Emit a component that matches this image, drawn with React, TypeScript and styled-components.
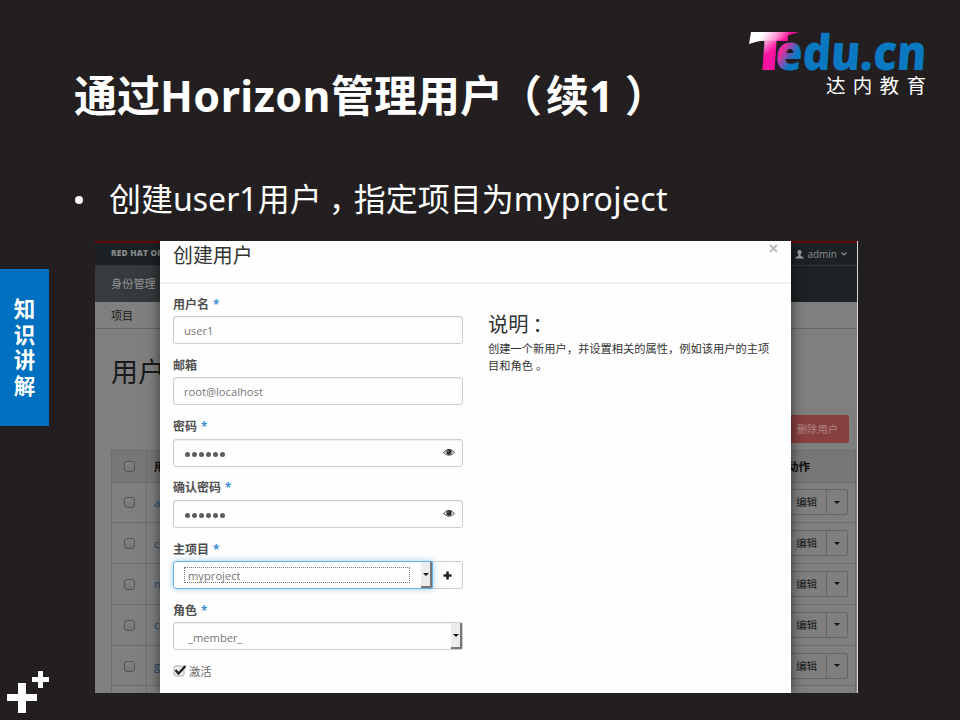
import React from 'react';
import styled, { createGlobalStyle } from 'styled-components';

const GlobalStyle = createGlobalStyle`
  * { box-sizing: border-box; }
  body {
    margin: 0;
    background: #231f20;
    font-family: "Open Sans", "Noto Sans CJK SC", sans-serif;
  }
`;

/* ---------- slide ---------- */

const Slide = styled.main`
  width: 960px;
  height: 720px;
  overflow: hidden;
  background: #231f20;
  color: #fff;
  display: grid;
  grid-template-rows: 241px 479px;
`;

const Header = styled.header`
  display: grid;
  grid-template-columns: 675px 1fr;
  padding: 0 0 0 74px;
`;

const Headings = styled.div`
  display: flex;
  flex-direction: column;
`;

const Title = styled.h1`
  margin: 65px 0 0;
  height: 62px;
  line-height: 62px;
  font-size: 43px;
  font-weight: 700;
  font-family: "Noto Sans", "Noto Sans CJK SC", sans-serif;
  white-space: nowrap;
`;

const Latin = styled.span`
  letter-spacing: 0.45px;
`;

const OpeningParen = styled.span`
  margin: 0 4px 0 -4px;
`;

const ClosingParen = styled.span`
  margin-left: 11px;
`;

const Bullet = styled.p`
  margin: 48px 0 0;
  height: 48px;
  line-height: 48px;
  display: flex;
  font-size: 32px;
  font-family: "Noto Sans", "Noto Sans CJK SC", sans-serif;
  white-space: nowrap;

  &::before {
    content: "";
    width: 8px;
    height: 8px;
    border-radius: 50%;
    background: #fff;
    margin: 21px 26px 0 1px;
  }
`;

const Project = styled.span`
  letter-spacing: 0.35px;
`;

const Comma = styled.span`
  margin: 0 -7px 0 7px;
`;

const Colon = styled.span`
  margin-left: 4px;
`;

const Brand = styled.div`
  width: 186px;
  padding-top: 24px;
`;

const BrandName = styled.div`
  margin-top: -2px;
  padding-left: 77px;
  font-family: "Noto Sans CJK SC", sans-serif;
  font-size: 19.5px;
  line-height: 25px;
  letter-spacing: 7.3px;
  white-space: nowrap;
`;

const LogoMark = styled.svg`
  display: block;
`;

const Body = styled.div`
  display: grid;
  grid-template-columns: 95px 763px;
`;

const Rail = styled.aside`
  display: flex;
  flex-direction: column;
  padding-top: 28px;
`;

const SideTab = styled.div`
  width: 49px;
  height: 157px;
  padding-top: 26px;
  background: #0070c0;
  display: flex;
  flex-direction: column;
  align-items: center;
  font-family: "Noto Sans CJK SC", sans-serif;
  font-size: 21.5px;
  font-weight: 700;
  line-height: 25.5px;
`;

const Pluses = styled.svg`
  margin: 245px 0 0 7px;
`;

/* ---------- dashboard behind the dialog ---------- */

const Screen = styled.section`
  position: relative;
  width: 763px;
  height: 452px;
  overflow: hidden;
  background: #7f7f7f;
  border-right: 1px solid #d8d8d8;
  color: #1a1a1a;
  font-size: 11px;
  white-space: nowrap;
`;

const TopBar = styled.div`
  height: 24px;
  padding: 0 9px 0 16px;
  border-top: 2px solid #6c0508;
  background: #1c2224;
  color: #8b8e8f;
  display: flex;
  justify-content: space-between;
  align-items: center;
`;

const Product = styled.span`
  font-size: 8.3px;
  font-weight: 800;
  letter-spacing: 0.2px;
  color: #858789;
  margin-top: -4px;
`;

const UserMenu = styled.span`
  display: flex;
  align-items: center;
  gap: 3px;
  font-size: 10px;
  line-height: 14px;
`;

const NavBar = styled.div`
  height: 37px;
  padding-left: 16px;
  background: linear-gradient(90deg, #383c3e 0, #34383a 80px, #1d2224 600px);
  border-top: 1px solid #303536;
  color: #909293;
  line-height: 36px;
  font-size: 11.2px;
`;

const SubNav = styled.div`
  height: 27px;
  padding-left: 16px;
  border-bottom: 1px solid #676767;
  line-height: 27px;
  font-size: 11px;
`;

const PageHead = styled.div`
  height: 121px;
  padding: 21px 8px 0 16px;
  display: flex;
  justify-content: space-between;
`;

const PageTitle = styled.h2`
  margin: 0;
  font-size: 27px;
  line-height: 44px;
  font-weight: 400;
`;

const DeleteButton = styled.span`
  width: 79px;
  height: 28px;
  margin-top: 65px;
  padding-right: 11px;
  border-radius: 2px;
  background: #883f3f;
  color: #ad8585;
  text-align: right;
  font-size: 10.3px;
  line-height: 28px;
`;

const Table = styled.div`
  width: 745px;
  margin-left: 16px;
  border: 1px solid #6c6c6c;
`;

const Row = styled.div<{ $head?: boolean }>`
  height: ${(p) => (p.$head ? 31.5 : 40.8)}px;
  border-bottom: 1px solid #6c6c6c;
  background: ${(p) => (p.$head ? '#777' : 'transparent')};
  font-weight: ${(p) => (p.$head ? 700 : 400)};
  display: grid;
  grid-template-columns: 35px 1fr 69px;
  align-items: center;
`;

const CheckCell = styled.div`
  align-self: stretch;
  display: flex;
  align-items: center;
  justify-content: center;
  border-right: 1px solid #6c6c6c;
`;

const Box = styled.i`
  width: 11px;
  height: 11px;
  margin: 1px 0 0 1px;
  border: 1px solid #555;
  border-radius: 3px;
  background: linear-gradient(#848484, #757575);
`;

const Name = styled.span<{ $link?: boolean }>`
  padding-left: 7px;
  color: ${(p) => (p.$link ? '#1f4567' : '#0c0c0c')};
`;

const ActionHead = styled.span`
  padding-left: 1px;
  font-size: 11.5px;
  color: #0c0c0c;
`;

const Actions = styled.div`
  width: 62px;
  height: 26px;
  border: 1px solid #666;
  border-radius: 2px;
  display: grid;
  grid-template-columns: 40px 1fr;
  align-items: center;
  font-size: 10.6px;
  line-height: 24px;
`;

const ActionLabel = styled.span`
  padding-left: 9px;
  border-right: 1px solid #666;
`;

const Caret = styled.i`
  justify-self: center;
  border: 3px solid transparent;
  border-top-color: #111;
  border-bottom: 0;
`;

/* ---------- dialog ---------- */

const Dialog = styled.div`
  position: absolute;
  left: 65px;
  top: 0;
  width: 631px;
  height: 452px;
  background: #fefefe;
  box-shadow: 0 0 12px rgba(0, 0, 0, 0.6);
  color: #333;
`;

const DialogHead = styled.div`
  height: 43px;
  padding: 0 13px;
  border-bottom: 2px solid #f0f0f0;
  display: flex;
  justify-content: space-between;
  font-size: 19.9px;
  line-height: 30px;
`;

const Close = styled.svg`
  margin: 3px 0 0;
`;

const DialogBody = styled.div`
  display: grid;
  grid-template-columns: 290px 290px;
  gap: 25px;
  padding: 10px 13px 0;
`;

const Field = styled.div`
  height: 61.3px;
`;

const Label = styled.div`
  height: 22px;
  line-height: 20px;
  padding-top: 0.5px;
  font-size: 12px;
  font-weight: 600;
  color: #505050;
`;

const Required = styled.span`
  margin-left: 4px;
  color: #3b8ed6;
  font-weight: 700;
  font-size: 11.5px;
`;

const Input = styled.div<{ $focus?: boolean; $flat?: boolean }>`
  flex: 1;
  height: 28px;
  padding: 0 7px 0 10px;
  border: 1px solid ${(p) => (p.$focus ? '#66afe9' : '#ccc')};
  border-radius: ${(p) => (p.$flat ? '3px 0 0 3px' : '3px')};
  box-shadow: ${(p) => (p.$focus ? '0 0 6px rgba(102, 175, 233, 0.65)' : 'inset 0 1px 1px rgba(0,0,0,.06)')};
  display: flex;
  align-items: center;
  justify-content: space-between;
  font-size: 11.2px;
  color: #777;
`;

const SelectInput = styled(Input)`
  padding: 0;
`;

const FocusText = styled.span`
  width: 226px;
  height: 16px;
  margin: 0 0 0 10px;
  padding-left: 3px;
  border: 1px dotted #777;
  line-height: 16px;
`;

const PlainText = styled.span`
  padding: 2px 0 0 14px;
`;

const Dots = styled.span`
  display: flex;
  gap: 2px;
  margin: 3px 0 0 1px;

  i {
    width: 5px;
    height: 5px;
    border-radius: 50%;
    background: #5c5c5c;
  }
`;

const DropButton = styled.span`
  width: 11px;
  height: 26px;
  background: #ececec;
  border-right: 2px solid #777;
  border-bottom: 2px solid #777;
  display: grid;
  place-items: center;
`;

const Group = styled.div`
  display: flex;
`;

const AddButton = styled.span`
  width: 30px;
  height: 28px;
  border: 1px solid #ccc;
  border-left: 0;
  border-radius: 0 3px 3px 0;
  display: grid;
  place-items: center;
`;

const CheckLine = styled.div`
  display: flex;
  align-items: center;
  gap: 2px;
  height: 18px;
  font-size: 11.3px;
  color: #666;
`;

const HelpTitle = styled.h3`
  margin: 14px 0 0;
  font-size: 20.3px;
  line-height: 32px;
  font-weight: 400;
`;

const HelpText = styled.p`
  margin: 1px 0 0;
  font-size: 11.25px;
  line-height: 16.5px;
  white-space: normal;
`;

const Logo = () => (
  <LogoMark width="186" height="50" viewBox="749 24 186 50">
    <defs>
      <linearGradient id="tee" gradientUnits="userSpaceOnUse" x1="6" y1="-32" x2="20" y2="-16">
        <stop offset="0" stopColor="#fff" />
        <stop offset="0.85" stopColor="#ff1ba6" />
        <stop offset="1" stopColor="#fb12a0" />
      </linearGradient>
      <linearGradient id="edu" gradientUnits="userSpaceOnUse" x1="2" y1="-16" x2="18" y2="-8">
        <stop offset="0.1" stopColor="#f5289c" />
        <stop offset="0.9" stopColor="#0b78c2" />
      </linearGradient>
      <linearGradient id="swoosh" gradientUnits="userSpaceOnUse" x1="762" y1="30" x2="785" y2="44">
        <stop offset="0.1" stopColor="#fff" />
        <stop offset="0.6" stopColor="#ff8fd0" />
        <stop offset="1" stopColor="#f00a92" />
      </linearGradient>
    </defs>
    <g transform="translate(750 70) skewX(-4)">
      <text x="0" y="0" fontFamily="Open Sans" fontWeight="800" fontSize="52" textLength="37" lengthAdjust="spacingAndGlyphs" fill="url(#tee)">T</text>
    </g>
    <path d="M751 32H799Q787 35 776 41Q762 39 749 44Z" fill="url(#swoosh)" />
    <g transform="translate(774.500 70) skewX(-4)">
      <text x="0" y="0" fontFamily="Open Sans" fontWeight="800" fontSize="49" textLength="151" lengthAdjust="spacingAndGlyphs" fill="url(#edu)">edu.cn</text>
    </g>
  </LogoMark>
);

const Eye = () => (
  <svg width="12" height="9" viewBox="0 0 12 9">
    <path d="M.5 4.5Q6-1.7 11.5 4.5Q6 10 .5 4.5Z" fill="none" stroke="#333" strokeWidth=".9" />
    <circle cx="6" cy="4" r="2.7" fill="#2b2b2b" />
    <circle cx="5" cy="3" r=".7" fill="#bbb" />
  </svg>
);

const Password = () => (
  <Input>
    <Dots>{[0, 1, 2, 3, 4, 5].map((n) => <i key={n} />)}</Dots>
    <Eye />
  </Input>
);

const FormField = ({ label, required, children }: { label: string; required?: boolean; children: React.ReactNode }) => (
  <Field>
    <Label>{label}{required && <Required>*</Required>}</Label>
    {children}
  </Field>
);

export default function App() {
  return (
    <Slide>
      <GlobalStyle />
      <Header>
        <Headings>
          <Title>通过<Latin>Horizon</Latin>管理用户<OpeningParen>（</OpeningParen>续1<ClosingParen>）</ClosingParen></Title>
          <Bullet><span>创建user1用户<Comma>，</Comma>指定项目为<Project>myproject</Project></span></Bullet>
        </Headings>
        <Brand>
          <Logo />
          <BrandName>达内教育</BrandName>
        </Brand>
      </Header>
      <Body>
        <Rail>
          <SideTab>{['知', '识', '讲', '解'].map((c) => <span key={c}>{c}</span>)}</SideTab>
          <Pluses width="43" height="43" viewBox="0 0 43 43" fill="#fff">
            <path d="M11 12h8v11h11v7H19v12h-8V30H0v-7h11ZM31 0h5v6h6v5h-6v6h-5v-6h-6V6h6Z" />
          </Pluses>
        </Rail>
        <Screen>
          <TopBar>
            <Product>RED HAT OPENSTACK</Product>
            <UserMenu>
              <svg width="9" height="9" viewBox="0 0 9 9" fill="#9b9d9e">
                <path d="M4.5 0C6 0 6.7 1 6.5 2.5Q6.300 4 5.500 4.700V5.800L8.500 7.300V8.500H.5V7.300L3.500 5.800V4.700Q2.700 4 2.500 2.500C2.300 1 3 0 4.500 0Z" />
              </svg>
              admin
              <svg width="8" height="6" viewBox="0 0 8 6" fill="none" stroke="#8b8e8f" strokeWidth="1.2"><path d="M1.500 1.500L4 4L6.500 1.500" /></svg>
            </UserMenu>
          </TopBar>
          <NavBar>身份管理</NavBar>
          <SubNav>项目</SubNav>
          <PageHead>
            <PageTitle>用户</PageTitle>
            <DeleteButton>删除用户</DeleteButton>
          </PageHead>
          <Table>
            <Row $head>
              <CheckCell><Box /></CheckCell>
              <Name>用户名</Name>
              <ActionHead>动作</ActionHead>
            </Row>
            {['admin', 'cinder', 'neutron', 'ceilometer', 'glance'].map((name) => (
              <Row key={name}>
                <CheckCell><Box /></CheckCell>
                <Name $link>{name}</Name>
                <Actions><ActionLabel>编辑</ActionLabel><Caret /></Actions>
              </Row>
            ))}
            <Row><CheckCell /></Row>
          </Table>
          <Dialog>
            <DialogHead>
              <span>创建用户</span>
              <Close width="9" height="9" viewBox="0 0 9 9" stroke="#bbb" strokeWidth="2"><path d="M1 1L8 8M8 1L1 8" /></Close>
            </DialogHead>
            <DialogBody>
              <div>
                <FormField label="用户名" required><Input>user1</Input></FormField>
                <FormField label="邮箱"><Input>root@localhost</Input></FormField>
                <FormField label="密码" required><Password /></FormField>
                <FormField label="确认密码" required><Password /></FormField>
                <FormField label="主项目" required>
                  <Group>
                    <SelectInput $focus $flat>
                      <FocusText>myproject</FocusText>
                      <DropButton><Caret /></DropButton>
                    </SelectInput>
                    <AddButton>
                      <svg width="9" height="9" viewBox="0 0 9 9" fill="#222"><path d="M3.200.5h2.600v2.700h2.700v2.600H5.800v2.700H3.200V5.800H.5V3.200h2.700Z" /></svg>
                    </AddButton>
                  </Group>
                </FormField>
                <FormField label="角色" required>
                  <SelectInput>
                    <PlainText>_member_</PlainText>
                    <DropButton><Caret /></DropButton>
                  </SelectInput>
                </FormField>
                <CheckLine>
                  <svg width="14" height="13" viewBox="0 0 14 13">
                    <rect x="1" y="2" width="10" height="10" rx="2" fill="#eee" stroke="#aaa" />
                    <path d="M2.500 6L5.500 9.500L12.500 2" fill="none" stroke="#1c2224" strokeWidth="2.300" />
                  </svg>
                  激活
                </CheckLine>
              </div>
              <div>
                <HelpTitle>说明<Colon>：</Colon></HelpTitle>
                <HelpText>创建一个新用户，并设置相关的属性，例如该用户的主项目和角色 。</HelpText>
              </div>
            </DialogBody>
          </Dialog>
        </Screen>
      </Body>
    </Slide>
  );
}
